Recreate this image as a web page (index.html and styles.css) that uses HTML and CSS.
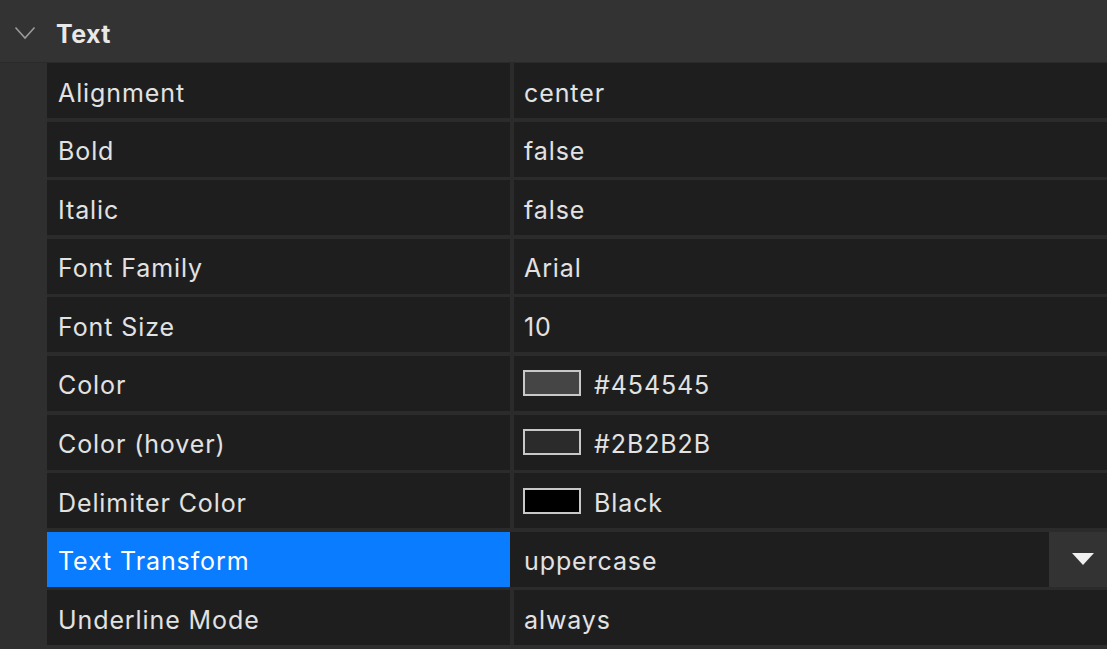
FILE: index.html
```html
<!DOCTYPE html>
<html lang="en">
<head>
    <meta charset="UTF-8">
    <meta name="viewport" content="width=device-width, initial-scale=1.0">
    <title>Inspector</title>
    <link rel="stylesheet" href="styles.css">
</head>
<body>
    <div id="inspector">
        <div class="section-head">
            <svg class="chevron" width="22" height="14" viewBox="0 0 22 14">
                <polyline points="1.5,1.5 11,12 20.5,1.5" fill="none" stroke="#9a9a9a" stroke-width="1.6"/>
            </svg>
            <span class="section-title">Text</span>
        </div>
        <div class="props">
            <div class="label">Alignment</div>
            <div class="value">center</div>

            <div class="label">Bold</div>
            <div class="value">false</div>

            <div class="label">Italic</div>
            <div class="value">false</div>

            <div class="label">Font Family</div>
            <div class="value">Arial</div>

            <div class="label">Font Size</div>
            <div class="value">10</div>

            <div class="label">Color</div>
            <div class="value"><span class="swatch" style="background:#454545"></span>#454545</div>

            <div class="label">Color (hover)</div>
            <div class="value"><span class="swatch" style="background:#2b2b2b"></span>#2B2B2B</div>

            <div class="label">Delimiter Color</div>
            <div class="value"><span class="swatch" style="background:#000000"></span>Black</div>

            <div class="label selected">Text Transform</div>
            <div class="value editing">
                <div class="field">uppercase</div>
                <div class="drop"><span class="arrow"></span></div>
            </div>

            <div class="label">Underline Mode</div>
            <div class="value">always</div>
        </div>
    </div>
</body>
</html>
```

FILE: styles.css
```css
body {
    margin: 0;
    background: #2f2f2f;
    font-family: Inter, "Open Sans", sans-serif;
    overflow: hidden;
}

#inspector {
    width: 1107px;
    height: 649px;
}

.section-head {
    background: #333333;
    height: 63px;
    border-bottom: 1px solid #2a2a2a;
    display: flex;
    align-items: center;
    padding-left: 14px;
    padding-top: 5px;
    box-sizing: border-box;
}

.chevron {
    margin-right: 20px;
    margin-top: -2px;
}

.section-title {
    color: #e8e8e8;
    font-size: 25px;
    font-weight: bold;
    letter-spacing: 0.4px;
}

.props {
    display: grid;
    grid-template-columns: 463px 1fr;
    grid-auto-rows: 55px;
    column-gap: 4px;
    row-gap: 3.6px;
    margin-left: 47px;
    background: #2b2b2b;
}

.label, .value {
    background: #1e1e1e;
    color: #e2e2e2;
    font-size: 25px;
    letter-spacing: 0.9px;
    display: flex;
    align-items: center;
    padding-top: 4px;
    box-sizing: border-box;
}

.label {
    padding-left: 11px;
}

.value {
    padding-left: 10px;
}

.label.selected {
    background: #0a7cff;
    color: #ffffff;
}

.swatch {
    width: 54px;
    height: 22px;
    border: 2px solid #c8c8c8;
    margin-left: -1px;
    margin-right: 13px;
    margin-top: -4px;
}

.value.editing {
    padding: 0;
    margin-left: -4px;
    background: #333333;
    align-items: stretch;
}

.field {
    flex: 1;
    background: #1e1e1e;
    display: flex;
    align-items: center;
    padding-left: 14px;
    padding-top: 4px;
}

.drop {
    width: 58px;
    display: flex;
    align-items: center;
    padding-left: 23px;
    box-sizing: border-box;
}

.arrow {
    width: 0;
    height: 0;
    border-left: 11px solid transparent;
    border-right: 11px solid transparent;
    border-top: 12px solid #f0f0f0;
}
```
